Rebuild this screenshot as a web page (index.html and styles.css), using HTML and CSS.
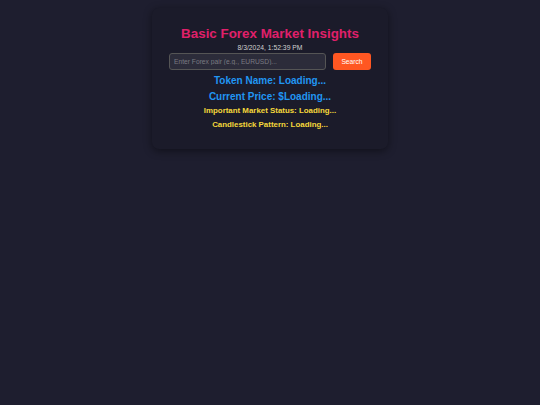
FILE: index.html
```html
<!DOCTYPE html>
<html>
<head>
<meta charset="utf-8">
<link rel="stylesheet" href="styles.css">
</head>
<body>
<div class="page">
  <div class="card">
    <h1 class="title">Basic Forex Market Insights</h1>
    <div class="date">8/3/2024, 1:52:39 PM</div>
    <div class="search-row">
      <input class="pair-input" type="text" placeholder="Enter Forex pair (e.g., EURUSD)...">
      <button class="search-btn">Search</button>
    </div>
    <div class="info-big first">Token Name: Loading...</div>
    <div class="info-big">Current Price: $Loading...</div>
    <div class="info-small">Important Market Status: Loading...</div>
    <div class="info-small">Candlestick Pattern: Loading...</div>
  </div>
</div>
</body>
</html>
```
FILE: styles.css
```css
html, body {
  margin: 0;
  padding: 0;
  background: #1e1e2f;
  font-family: "Liberation Sans", Arial, sans-serif;
  height: 100%;
}
.page {
  display: flex;
  justify-content: center;
  padding-top: 8px;
}
.card {
  width: 236px;
  box-sizing: border-box;
  background: #1b1b2a;
  border-radius: 7px;
  box-shadow: 0 2px 8px rgba(0, 0, 0, 0.45);
  padding: 18px 17px 19px;
  display: flex;
  flex-direction: column;
  align-items: center;
  text-align: center;
}
.title {
  margin: 0;
  font-size: 13.4px;
  line-height: 16px;
  font-weight: bold;
  color: #e0206a;
}
.date {
  margin-top: 2px;
  font-size: 6.8px;
  line-height: 8px;
  color: #d0d0d0;
}
.search-row {
  margin-top: 1px;
  display: flex;
  gap: 7px;
  width: 202px;
}
.pair-input {
  width: 157px;
  height: 17px;
  box-sizing: border-box;
  background: #2c2c3a;
  border: 1px solid #555;
  border-radius: 3px;
  padding: 0 4px;
  font-family: "Liberation Sans", Arial, sans-serif;
  font-size: 6.7px;
  color: #ccc;
  outline: none;
}
.pair-input::placeholder {
  color: #7a7a82;
}
.search-btn {
  width: 38px;
  height: 17px;
  box-sizing: border-box;
  background: #ff5722;
  border: none;
  border-radius: 3px;
  color: #fff;
  font-family: "Liberation Sans", Arial, sans-serif;
  font-size: 6.7px;
  padding: 0;
}
.info-big {
  margin-top: 4px;
  font-size: 10px;
  line-height: 12px;
  font-weight: bold;
  color: #2196f3;
}
.info-big.first {
  margin-top: 5px;
}
.info-small {
  margin-top: 3px;
  font-size: 7.9px;
  line-height: 10px;
  font-weight: bold;
  color: #f5d83a;
}
.info-small + .info-small {
  margin-top: 4px;
}
```
